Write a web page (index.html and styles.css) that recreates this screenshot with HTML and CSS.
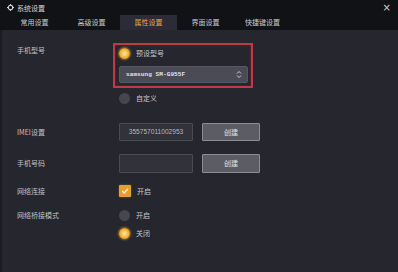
FILE: index.html
```html
<!DOCTYPE html>
<html lang="zh-CN">
<head>
<meta charset="utf-8">
<title>系统设置</title>
<link rel="stylesheet" href="styles.css">
</head>
<body>
<div class="window">
  <div class="header">
    <div class="titlebar">
      <svg class="gear" width="7" height="7" viewBox="0 0 10 10">
        <circle cx="5" cy="5" r="3.2" fill="none" stroke="#d8d8d8" stroke-width="1.6"/>
        <g stroke="#d8d8d8" stroke-width="1.6">
          <line x1="5" y1="0" x2="5" y2="2"/><line x1="5" y1="8" x2="5" y2="10"/>
          <line x1="0" y1="5" x2="2" y2="5"/><line x1="8" y1="5" x2="10" y2="5"/>
        </g>
      </svg>
      <span class="title">系统设置</span>
      <span class="close">×</span>
    </div>
    <div class="tabs">
      <div class="tab">常用设置</div>
      <div class="tab">高级设置</div>
      <div class="tab active">属性设置</div>
      <div class="tab">界面设置</div>
      <div class="tab">快捷键设置</div>
    </div>
  </div>
  <div class="content">
    <div class="row row-model">
      <div class="label">手机型号</div>
      <div class="model-box">
        <div class="option">
          <span class="radio on"></span><span class="opt-text">预设型号</span>
        </div>
        <div class="select">
          <span class="select-text">samsung SM-G955F</span>
          <svg class="chev" width="6" height="9" viewBox="0 0 6 9">
            <polyline points="1,3.5 3,1.5 5,3.5" fill="none" stroke="#d0d0d0" stroke-width="1"/>
            <polyline points="1,5.5 3,7.5 5,5.5" fill="none" stroke="#d0d0d0" stroke-width="1"/>
          </svg>
        </div>
      </div>
    </div>
    <div class="row row-custom">
      <div class="label"></div>
      <div class="field">
        <div class="option"><span class="radio"></span><span class="opt-text">自定义</span></div>
      </div>
    </div>
    <div class="row row-imei">
      <div class="label">IMEI设置</div>
      <div class="field inline">
        <div class="input">355757011002953</div>
        <div class="btn">创建</div>
      </div>
    </div>
    <div class="row row-phone">
      <div class="label">手机号码</div>
      <div class="field inline">
        <div class="input empty"></div>
        <div class="btn">创建</div>
      </div>
    </div>
    <div class="row row-net">
      <div class="label">网络连接</div>
      <div class="field">
        <div class="option">
          <span class="check">
            <svg width="8" height="8" viewBox="0 0 8 8"><polyline points="1.2,4 3.2,6 6.8,2" fill="none" stroke="#fff6e0" stroke-width="1.3"/></svg>
          </span><span class="opt-text">开启</span>
        </div>
      </div>
    </div>
    <div class="row row-bridge">
      <div class="label">网络桥接模式</div>
      <div class="field stack">
        <div class="option"><span class="radio"></span><span class="opt-text">开启</span></div>
        <div class="option"><span class="radio on"></span><span class="opt-text">关闭</span></div>
      </div>
    </div>
  </div>
</div>
</body>
</html>
```
FILE: styles.css
```css
* { box-sizing: border-box; }
html, body { margin: 0; padding: 0; }
body {
  width: 398px;
  height: 272px;
  overflow: hidden;
  background: #25262e;
  font-family: "Noto Sans CJK SC", "Noto Sans", sans-serif;
  font-size: 7px;
  color: #c4c4c8;
}
.window {
  width: 398px;
  height: 272px;
  display: flex;
  flex-direction: column;
}
.header {
  background: #111216;
  height: 30px;
  display: flex;
  flex-direction: column;
}
.titlebar {
  height: 15px;
  display: flex;
  align-items: center;
  padding-left: 7px;
  padding-right: 7px;
}
.gear { margin-right: 3px; }
.title {
  line-height: 14px;
  color: #d4d4d8;
}
.close {
  margin-left: auto;
  font-family: "DejaVu Sans", sans-serif;
  font-size: 10px;
  line-height: 14px;
  color: #d0d0d4;
}
.tabs {
  height: 15px;
  display: flex;
  padding-left: 6px;
}
.tab {
  width: 57px;
  text-align: center;
  line-height: 15px;
  color: #c8c8cc;
}
.tab.active {
  background: #2b2c37;
  color: #e8a443;
}
.content {
  flex: 1;
  border-left: 2px solid #1b1c21;
  padding: 13px 0 0 15px;
  display: flex;
  flex-direction: column;
}
.row {
  display: flex;
  align-items: flex-start;
}
.label {
  width: 96px;
  flex: none;
  line-height: 14px;
  color: #c0c0c4;
}
.row-imei .label, .row-phone .label { line-height: 18px; }
.field { padding-left: 6px; }
.inline { display: flex; gap: 9px; }
.stack { display: flex; flex-direction: column; gap: 4px; }
.row-custom { margin-top: 3px; }
.row-imei { margin-top: 18px; }
.row-phone { margin-top: 13px; }
.row-net { margin-top: 11px; }
.row-bridge { margin-top: 10px; }

.model-box {
  width: 140px;
  height: 45px;
  border: 2px solid #bd3a46;
  box-shadow: inset 0 0 0 1px #4a2329;
  padding: 1px 4px 3px 4px;
  display: flex;
  flex-direction: column;
  gap: 6px;
}
.option {
  display: flex;
  align-items: center;
  height: 14px;
}
.opt-text {
  line-height: 14px;
  margin-left: 6px;
  color: #c8c8cc;
}
.radio {
  width: 11px;
  height: 11px;
  border-radius: 50%;
  background: #45464e;
  flex: none;
}
.radio.on {
  background: radial-gradient(circle, #fbe7a6 0, #f6c75a 35%, #e59a22 70%, #c9801c 100%);
  box-shadow: 0 0 2px 1px rgba(240, 160, 50, 0.55);
}
.select {
  width: 129px;
  height: 17px;
  background: #4a4b54;
  border: 1px solid #56575f;
  border-radius: 2px;
  display: flex;
  align-items: center;
  padding: 0 5px 0 6px;
}
.select-text {
  font-family: "Liberation Mono", "DejaVu Sans Mono", monospace;
  font-size: 6px;
  font-weight: bold;
  letter-spacing: 0.1px;
  color: #e2e2e6;
}
.chev { margin-left: auto; }
.input {
  width: 74px;
  height: 18px;
  background: #31323a;
  border: 1px solid #4a4b53;
  border-radius: 1px;
  text-align: center;
  line-height: 16px;
  font-family: "Liberation Sans", sans-serif;
  font-size: 6.6px;
  color: #b8b8bc;
}
.btn {
  width: 58px;
  height: 18px;
  background: #5c5d63;
  border: 1px solid #8c8d92;
  border-radius: 1px;
  text-align: center;
  line-height: 16px;
  color: #e0e0e4;
}
.row-phone .input { height: 19px; }
.row-phone .btn { height: 19px; line-height: 17px; }
.check {
  width: 12px;
  height: 12px;
  background: #e69d35;
  border-radius: 1px;
  display: flex;
  align-items: center;
  justify-content: center;
  box-shadow: 0 0 2px rgba(240, 160, 50, 0.5);
  flex: none;
}
.check svg { display: block; }
```
